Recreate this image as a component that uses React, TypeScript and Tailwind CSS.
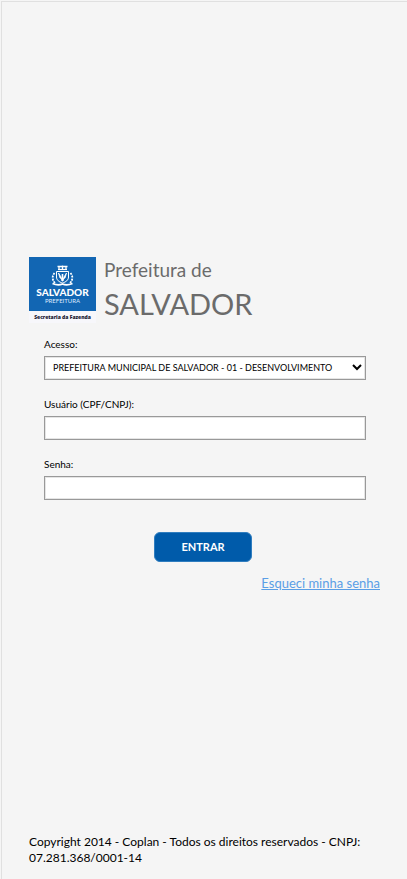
function CityLogo() {
  return (
    <svg viewBox="0 0 67 66" className="h-[66px] w-[67px] shrink-0" role="img" aria-label="Salvador Prefeitura">
      <rect width="67" height="66" fill="#f7f7fb" />
      <rect width="67" height="54" fill="#1266b3" />
      <g fill="none" stroke="#fff">
        <path d="M29 12.500H38" strokeWidth="1.200" />
        <path d="M28.500 9.500H38.500M30 9V12M33.500 8.500V12M37 9V12" strokeWidth="1.300" />
        <path d="M27.500 14.500H39.500V20C39.500 23 37 25 33.500 26C30 25 27.500 23 27.500 20Z" strokeWidth="1" />
        <path d="M29.500 16L32 20L33 24H34L35 20L37.500 16L36 21L33.500 22L31 21Z" fill="#fff" strokeWidth="0.800" />
        <path d="M33.500 17V24" strokeWidth="1.600" />
        <path d="M25.500 16C23 19 23 23 26 26M41.500 16C44 19 44 23 41 26" strokeWidth="1.800" strokeDasharray="2 1" />
        <path d="M23.500 26.500Q29 29 33.500 27Q38 29 43.500 26.500" strokeWidth="1.800" />
      </g>
      <text x="33.500" y="39" textAnchor="middle" fill="#fff" className="font-['Lato',sans-serif] text-[10px] font-black">SALVADOR</text>
      <text x="33.500" y="46" textAnchor="middle" fill="#dceaff" className="font-['Lato',sans-serif] text-[6px]">PREFEITURA</text>
      <text x="33.500" y="62" textAnchor="middle" fill="#161630" className="font-['Open_Sans',sans-serif] text-[5px] font-extrabold">Secretaria da Fazenda</text>
    </svg>
  );
}

const control = "block h-6 w-full rounded-none border border-[#999] bg-white text-black shadow-[inset_0_0_0_1px_#e5e5e5] outline-none";

export default function App() {
  return (
    <div className="flex min-h-screen flex-col bg-[#f5f5f5] pt-px pl-px font-['Lato',sans-serif] text-black">
      <div className="flex flex-1 flex-col border-t border-l border-[#e0e0e0] px-[27px]">
        <main className="flex flex-1 flex-col justify-center pt-3.5">
          <header className="flex gap-2">
            <CityLogo />
            <h1 className="text-[#6b6b6b]">
              <span className="block text-[19px] leading-[26px]">Prefeitura de</span>
              <span className="block text-[29px] leading-[42px]">SALVADOR</span>
            </h1>
          </header>

          <form className="mt-[11px] pr-[3px]" onSubmit={(event) => event.preventDefault()}>
            <div className="mr-[11px] ml-[15px]">
              <label htmlFor="acesso" className="mb-1 block text-[10px] leading-4">Acesso:</label>
              <div className="relative">
                <select id="acesso" className={`${control} appearance-none pr-5 pl-2 text-[9px]`}>
                  <option>PREFEITURA MUNICIPAL DE SALVADOR - 01 - DESENVOLVIMENTO</option>
                </select>
                <svg viewBox="0 0 10 7" className="pointer-events-none absolute top-2 right-1 h-[7px] w-[10px]" aria-hidden="true">
                  <path d="M1 1L5 5L9 1" fill="none" stroke="#000" strokeWidth="2" />
                </svg>
              </div>

              <label htmlFor="usuario" className="mt-4 mb-1 block text-[10px] leading-4">Usuário (CPF/CNPJ):</label>
              <input id="usuario" type="text" className={`${control} px-2 text-[10px]`} />

              <label htmlFor="senha" className="mt-4 mb-1 block text-[10px] leading-4">Senha:</label>
              <input id="senha" type="password" className={`${control} px-2 text-[10px]`} />
            </div>

            <button type="submit" className="mx-auto mt-8 block h-[30px] w-[98px] rounded-md border border-[#2f7dbf] bg-[#005baa] text-[11px] font-bold text-white">
              ENTRAR
            </button>
          </form>

          <a href="#recuperar" className="mt-[11px] self-end text-[13px] leading-5 text-[#5a9ee6] underline">Esqueci minha senha</a>
        </main>

        <footer className="pb-[13px] text-[12px] leading-4">Copyright 2014 - Coplan - Todos os direitos reservados - CNPJ: 07.281.368/0001-14</footer>
      </div>
    </div>
  );
}
